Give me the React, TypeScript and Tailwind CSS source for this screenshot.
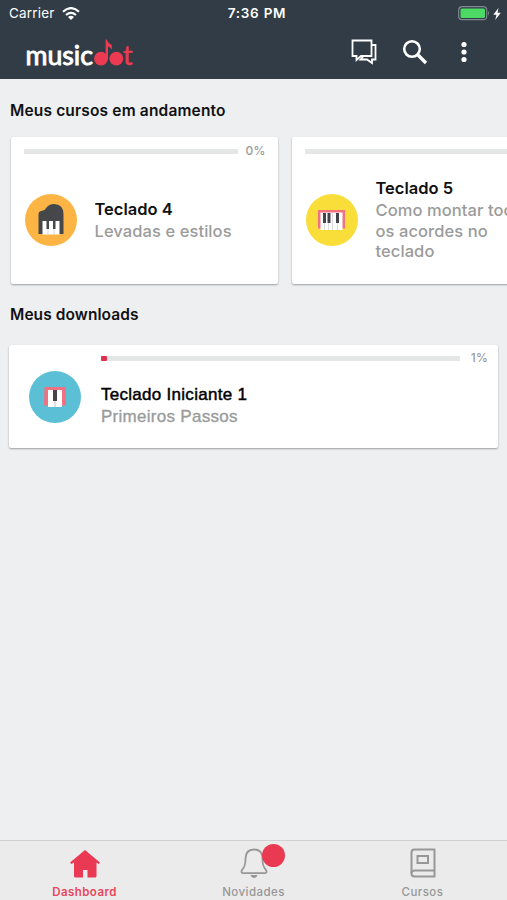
import React from 'react';
import clsx from 'clsx';

interface Course {
  title: string;
  description: string;
  progress: number;
  icon: React.ReactNode;
  color: string;
}

function GrandPianoIcon() {
  return (
    <svg width="26" height="32" viewBox="0 0 26 32" className="mb-px ml-px">
      <path d="M0.5 31V11Q0.5 8.5 3 8Q7 7.500 8.500 4.500Q11 1 16 1Q25.500 1.500 25.500 11V31Z" fill="#46474b" />
      <rect x="4.500" y="18" width="17" height="13.500" fill="#fff" />
      <path d="M10 18.500V31.500M16 18.500V31.500" stroke="#c9c9cc" strokeWidth="0.700" />
      <path d="M8.500 18h2.500v8h-2.500zM15 18h2.500v8h-2.500z" fill="#46474b" />
    </svg>
  );
}

function KeyboardIcon() {
  return (
    <svg width="27" height="20" viewBox="0 0 27 20">
      <path d="M0 0H27V18.500H0Z" fill="#f4717f" />
      <rect x="2.500" y="2.500" width="22" height="17.500" fill="#fff" />
      <path d="M6.500 13v7M10.500 13v7M14.500 3v17M19.500 13v7" stroke="#cfcfd6" strokeWidth="0.800" />
      <path d="M5 3h3v10H5zM9.500 3h3v10h-3zM18 3h3v10h-3z" fill="#43434b" />
    </svg>
  );
}

function KeysIcon() {
  return (
    <svg width="22" height="20" viewBox="0 0 22 20">
      <path d="M0.500 0H21.500L22 18.500H0Z" fill="#f0717f" />
      <rect x="4" y="3" width="14" height="17" fill="#fff" />
      <path d="M11 13v7" stroke="#c5bdbd" strokeWidth="1" />
      <rect x="9" y="3" width="4" height="11" fill="#4b4446" />
    </svg>
  );
}

const courses: Course[] = [
  { title: 'Teclado 4', description: 'Levadas e estilos', progress: 0, icon: <GrandPianoIcon />, color: 'bg-[#fcb545]' },
  { title: 'Teclado 5', description: 'Como montar todos os acordes no teclado', progress: 0, icon: <KeyboardIcon />, color: 'bg-[#f9dd39]' },
];

function Logo() {
  return (
    <svg width="108" height="32" viewBox="0 0 108 32" className="overflow-visible">
      <text x="-0.500" y="28" textLength="67.500" lengthAdjust="spacingAndGlyphs" fill="#fff" stroke="#fff" strokeWidth="0.900" className="font-[Lato] text-[26px]">
        music
      </text>
      <circle cx="75" cy="21.700" r="6.900" fill="#ec3a52" />
      <path d="M79.600 22V2.500H80.800Q81.500 5.500 85.800 8V12.500Q84 10 82 9.500V22Z" fill="#ec3a52" />
      <circle cx="90.300" cy="21.700" r="6.900" fill="#ec3a52" />
      <text x="97" y="28" textLength="9.500" lengthAdjust="spacingAndGlyphs" fill="#ec3a52" stroke="#ec3a52" strokeWidth="0.500" className="font-[Lato] text-[26px]">
        t
      </text>
    </svg>
  );
}

function StatusBar() {
  return (
    <div className="flex h-[27px] items-center justify-between pr-[6px] pl-[9px] text-[13.500px]">
      <div className="flex w-[150px] items-center gap-[7px]">
        <span className="tracking-[0.200px]">Carrier</span>
        <svg width="18" height="13" viewBox="0 0 18 13" fill="none" stroke="#fff" strokeWidth="2.200">
          <path d="M1 4.700Q9 -2.500 17 4.700M4 8Q9 3.700 14 8" />
          <path d="M6 10Q9 7.500 12 10L9 13Z" fill="#fff" stroke="none" />
        </svg>
      </div>
      <span className="ml-[4px] text-[13.500px] font-semibold tracking-[0.750px]">7:36 PM</span>
      <div className="flex w-[150px] items-center justify-end gap-[3px]">
        <svg width="32" height="15" viewBox="0 0 32 15">
          <rect x="0.700" y="0.700" width="28" height="13" rx="3.500" fill="none" stroke="#7d878e" strokeWidth="1.200" />
          <rect x="2.500" y="2.500" width="24.500" height="9.500" rx="1.500" fill="#4cd964" />
          <path d="M30 5Q32 7.200 30 9.500Z" fill="#7d878e" />
        </svg>
        <svg width="8" height="12" viewBox="0 0 8 12" fill="#fff">
          <path d="M5.500 0L0.300 6.800H3.500L2.200 12L7.800 4.800H4.600Z" />
        </svg>
      </div>
    </div>
  );
}

function Header() {
  return (
    <header className="h-[79px] shrink-0 bg-[#313c46] text-white">
      <StatusBar />
      <div className="flex h-[50px] items-center pr-[40px] pl-[26px]">
        <div className="mt-[1px] mr-auto">
          <Logo />
        </div>
        <svg width="26" height="26" viewBox="0 0 26 26" fill="none" stroke="#fff" strokeWidth="1.800">
          <path d="M1.500 1.500H20.500V17H10L5.500 21V17H1.500Z" />
          <path d="M20.500 6H24.500V20.500H21V24L16 20.500H9.500L12.500 17" />
        </svg>
        <svg width="26" height="26" viewBox="0 0 26 26" fill="none" stroke="#fff" className="ml-[25px]">
          <circle cx="10" cy="10" r="7.800" strokeWidth="2.600" />
          <path d="M15.500 15.500L24 24" strokeWidth="3.400" />
        </svg>
        <svg width="6" height="22" viewBox="0 0 6 22" fill="#fff" className="ml-[33px]">
          <circle cx="3" cy="3.500" r="2.600" />
          <circle cx="3" cy="11" r="2.600" />
          <circle cx="3" cy="18.500" r="2.600" />
        </svg>
      </div>
    </header>
  );
}

function ProgressBar({ value }: { value: number }) {
  return (
    <div className="flex items-center">
      <div className="h-[5px] flex-1 bg-[#e5e7e7]">
        {value > 0 && <div className="h-full w-[6px] rounded-[1px] bg-[#e2314e]" />}
      </div>
      <span className="w-[28px] text-right text-[12px] leading-[14px] font-medium tracking-[0.200px] text-[#9b9b9b]">{value}%</span>
    </div>
  );
}

function CourseCard({ course }: { course: Course }) {
  return (
    <article className="flex h-[147px] w-[267px] shrink-0 flex-col rounded-[2px] bg-white pt-[7px] pr-3 pl-[13px] shadow-[0_1px_2px_rgba(0,0,0,0.35)]">
      <ProgressBar value={course.progress} />
      <div className="flex h-[123px] items-center gap-[18px]">
        <div className={clsx('ml-px flex size-[52px] shrink-0 items-center justify-center rounded-full', course.color)}>{course.icon}</div>
        <div className="w-[165px] shrink-0">
          <h3 className="mb-px text-[16.500px] leading-[22px] font-semibold text-[#111]">{course.title}</h3>
          <p className="text-[16.500px] leading-[20.500px] font-medium tracking-[0.080px] text-[#9b9b9b]">{course.description}</p>
        </div>
      </div>
    </article>
  );
}

function DownloadCard() {
  return (
    <article className="mx-[9px] flex h-[103px] rounded-[2px] bg-white shadow-[0_1px_2px_rgba(0,0,0,0.35)]">
      <div className="mt-[26px] ml-5 flex size-[52px] shrink-0 items-center justify-center rounded-full bg-[#5bbfd6]">
        <KeysIcon />
      </div>
      <div className="ml-5 flex-1 pt-[6px] pr-[10px]">
        <ProgressBar value={1} />
        <div className="mt-[19px] font-['Liberation_Sans',Arial,sans-serif] text-[17px] tracking-[0.280px]">
          <h3 className="leading-[22px] text-black [-webkit-text-stroke:0.450px]">Teclado Iniciante 1</h3>
          <p className="leading-[22px] text-[#9b9b9b] [-webkit-text-stroke:0.350px]">Primeiros Passos</p>
        </div>
      </div>
    </article>
  );
}

function TabBar() {
  return (
    <nav className="grid h-[60px] grid-cols-3 border-t border-[#cfd1d2] bg-[#ebebeb] text-[11.500px] font-medium tracking-[0.450px] text-[#979797]">
      <div className="flex flex-col items-center pt-[9px] font-semibold text-[#e9455b]">
        <svg width="30" height="28" viewBox="0 0 30 28" fill="#ea3a53">
          <path d="M15 0L30 12.500L28.500 14L26.500 12.500V26Q26.500 27.500 25 27.500H17.500V20H13V27.500H5.500Q4 27.500 4 26V12.500L1.500 14L0 12.500Z" />
        </svg>
        <span className="mt-[6px] leading-4">Dashboard</span>
      </div>
      <div className="flex flex-col items-center pt-[7px]">
        <div className="relative">
          <svg width="28" height="30" viewBox="0 0 28 30" fill="none" stroke="#979797" strokeWidth="1.800" strokeLinejoin="round">
            <path d="M14 1.500C7 1.500 5.500 6.500 5.500 11C5.500 18 4 19.500 2 22Q0.500 24.800 3 25.200H25Q27.500 24.800 26 22C24 19.500 22.500 18 22.500 11C22.500 6.500 21 1.500 14 1.500Z" />
            <path d="M10.500 27H17.500Q16.500 30 14 30Q11.500 30 10.500 27Z" fill="#979797" stroke="none" />
          </svg>
          <span className="absolute -top-[4px] left-[22px] size-[23px] rounded-full bg-[#e93a52]" />
        </div>
        <span className="mt-[6px] leading-4">Novidades</span>
      </div>
      <div className="flex flex-col items-center pt-[7px]">
        <svg width="26" height="30" viewBox="0 0 26 30" fill="none" stroke="#979797" strokeWidth="2">
          <path d="M24.500 1.500H4.500Q1.500 1.500 1.500 4.500V25.500Q1.500 28.500 4.500 28.500H24.500Z" strokeLinejoin="round" />
          <path d="M1.500 25Q1.500 22.500 4.500 22.500H24.500" />
          <rect x="7.500" y="8" width="10.500" height="7" />
        </svg>
        <span className="mt-[6px] leading-4">Cursos</span>
      </div>
    </nav>
  );
}

export default function App() {
  return (
    <div className="flex h-[900px] w-[507px] flex-col overflow-hidden bg-[#edeff1] font-[Inter,sans-serif]">
      <Header />
      <main className="flex-1">
        <h2 className="pt-[21px] pl-[10px] text-[15.500px] leading-[22px] font-semibold tracking-[0.160px] text-[#111]">Meus cursos em andamento</h2>
        <div className="mt-[15px] flex gap-[14px] pl-[10.500px]">
          {courses.map((course) => (
            <CourseCard key={course.title} course={course} />
          ))}
        </div>
        <h2 className="mt-[20px] mb-[19px] pl-[10px] text-[15.500px] leading-[22px] font-semibold tracking-[0.080px] text-[#111]">Meus downloads</h2>
        <DownloadCard />
      </main>
      <TabBar />
    </div>
  );
}
